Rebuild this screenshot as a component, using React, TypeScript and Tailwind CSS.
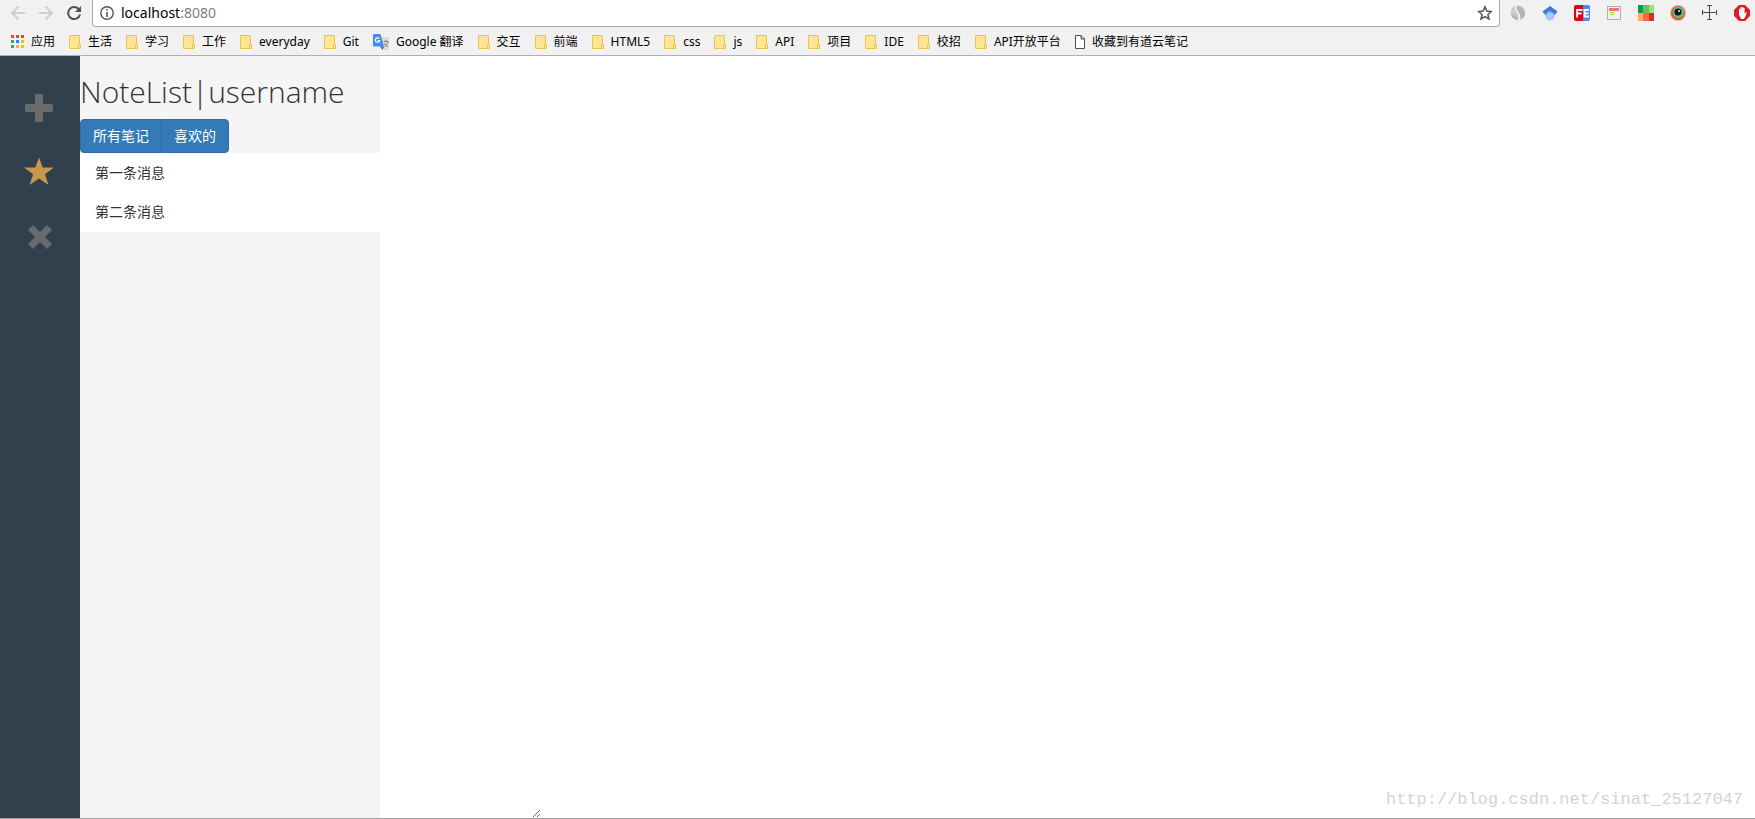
import React, { useState } from 'react';
import { clsx } from 'clsx';

type BookmarkKind = 'apps' | 'folder' | 'translate' | 'page';

interface Bookmark {
  label: string;
  kind: BookmarkKind;
}

interface Note {
  id: number;
  title: string;
  favorite: boolean;
}

const bookmarks: Bookmark[] = [
  { label: '应用', kind: 'apps' },
  { label: '生活', kind: 'folder' },
  { label: '学习', kind: 'folder' },
  { label: '工作', kind: 'folder' },
  { label: 'everyday', kind: 'folder' },
  { label: 'Git', kind: 'folder' },
  { label: 'Google 翻译', kind: 'translate' },
  { label: '交互', kind: 'folder' },
  { label: '前端', kind: 'folder' },
  { label: 'HTML5', kind: 'folder' },
  { label: 'css', kind: 'folder' },
  { label: 'js', kind: 'folder' },
  { label: 'API', kind: 'folder' },
  { label: '项目', kind: 'folder' },
  { label: 'IDE', kind: 'folder' },
  { label: '校招', kind: 'folder' },
  { label: 'API开放平台', kind: 'folder' },
  { label: '收藏到有道云笔记', kind: 'page' },
];

const notes: Note[] = [
  { id: 1, title: '第一条消息', favorite: false },
  { id: 2, title: '第二条消息', favorite: false },
];

const appDots = [
  '#ea4335', '#ea4335', '#ea4335',
  '#34a853', '#1a8cff', '#fbbc05',
  '#34a853', '#fbbc05', '#fbbc05',
];

const BookmarkIcon = ({ kind }: { kind: BookmarkKind }) => {
  if (kind === 'apps') {
    return (
      <svg width="13" height="13" viewBox="0 0 13 13" shapeRendering="crispEdges">
        {appDots.map((color, i) => (
          <rect key={i} x={(i % 3) * 5} y={Math.floor(i / 3) * 5} width="3" height="3" fill={color} />
        ))}
      </svg>
    );
  }
  if (kind === 'translate') {
    return (
      <svg width="16" height="16" viewBox="0 0 16 16">
        <path d="M7 3h9v13H9z" fill="#dcdcdc" />
        <path d="M10.500 7.500h5M13 6v1.500M15 7.500c-.5 2.500-2 4-4 5M11.500 9c.8 1.700 2 3 3.500 3.800" stroke="#7b8f94" fill="none" />
        <path d="M1 0h6.500l3.500 12.500H1a1 1 0 0 1-1-1V1a1 1 0 0 1 1-1z" fill="#4a8af4" />
        <path d="M7 12.500h4L9.500 16z" fill="#3a66c4" />
        <path d="M6.300 4.700A2.200 2.200 0 1 0 6.700 6.500H4.600" stroke="#fff" strokeWidth="1.200" fill="none" />
      </svg>
    );
  }
  if (kind === 'page') {
    return (
      <svg width="10" height="14" viewBox="0 0 10 14">
        <path d="M.5.5h5.500l3.500 3.500v9.500h-9zM6 .5V4h3.500" fill="#fff" stroke="#4d4d4d" />
      </svg>
    );
  }
  return (
    <svg width="12" height="14" viewBox="0 0 12 14">
      <path d="M.5.5h10v13H.5z" fill="#ffe594" stroke="#ebc549" />
      <path d="M9.500 9.500h2v4h-2z" fill="#ffe594" stroke="#ebc549" />
    </svg>
  );
};

/* Icons of the installed extensions, left to right */
const extensions = [
  {
    name: 'Proxy',
    icon: (
      <>
        <circle cx="8" cy="8" r="7.200" fill="#b5b5b5" />
        <path d="M7.500 0A7.200 7.200 0 0 0 1 9c2 1.500 6 1 7 5 2-5-5-7-.5-14z" fill="#cacaca" />
        <path d="M7 0C2 6.500 13 8 8.500 16" stroke="#f1f1f1" strokeWidth="1.800" fill="none" />
      </>
    ),
  },
  {
    name: 'Scholar',
    icon: (
      <>
        <path d="M8 1l7.500 5.500L12 11H4L.5 6.500z" fill="#3f78e0" />
        <circle cx="8" cy="11" r="4.500" fill="#a9c5fb" />
        <path d="M3.800 9.500a4.500 4.500 0 0 1 8.400 0L8 7z" fill="#6f9ff2" />
      </>
    ),
  },
  {
    name: 'FE Helper',
    icon: (
      <>
        <path d="M2 0h7v16H2a2 2 0 0 1-2-2V2a2 2 0 0 1 2-2z" fill="#e60012" />
        <path d="M9 0h5a2 2 0 0 1 2 2v12a2 2 0 0 1-2 2H9z" fill="#4a8af4" />
        <path d="M3 12.500V5h5.500M3 8.500h4.500M15 5h-4.500v6.500H15M10.500 8.300h4" stroke="#fff" strokeWidth="1.800" fill="none" />
      </>
    ),
  },
  {
    name: 'Reader',
    icon: (
      <>
        <rect x="1.500" y="1.500" width="13" height="13" fill="#f2f2f2" stroke="#b0b0b0" />
        <path d="M3 3h10v3H3z" fill="#ff6f69" />
        <path d="M4 7.500h4M4 9.500h4" stroke="#a5de37" />
      </>
    ),
  },
  {
    name: 'Palette',
    icon: (
      <>
        <path d="M0 0h5v8H0z" fill="#0f9d4c" />
        <path d="M5 0h6v8H5z" fill="#6abf62" />
        <path d="M11 0h5v8h-5z" fill="#a8dc6c" />
        <path d="M0 8h5v8H0z" fill="#ffab5e" />
        <path d="M5 8h6v8H5z" fill="#f56c40" />
        <path d="M11 8h5v8h-5z" fill="#d93222" />
      </>
    ),
  },
  {
    name: 'Color picker',
    icon: (
      <>
        <circle cx="8" cy="8" r="8" fill="#f5b070" />
        <circle cx="8" cy="8" r="7" fill="#e0523c" />
        <circle cx="8.500" cy="7.500" r="5.800" fill="#6fb85f" />
        <circle cx="8" cy="7" r="4.800" fill="#4fc0c8" />
        <circle cx="8" cy="7" r="3.500" fill="#101010" />
        <circle cx="9" cy="6" r="1" fill="#fff" />
      </>
    ),
  },
  {
    name: 'Ruler',
    icon: <path d="M0 7.500h15M7.500 0v15M5 .5h5M5 14.500h5M.5 5v5M14.500 5v5" stroke="#4a4a4a" fill="none" />,
  },
  {
    name: 'AdBlock',
    icon: (
      <>
        <path d="M5 0h6l5 5v6l-5 5H5l-5-5V5z" fill="#df1f1f" />
        <path d="M5 9.500V4h1.400v3.500V2.500h1.400v4.500V2h1.400v5.500V3h1.400v6l1-1.500h1.200L11 12.500 9.500 14H7z" fill="#fff" />
      </>
    ),
  },
];

const BrowserBar = () => {
  const [url, setUrl] = useState('localhost:8080');
  const [host, port] = url.split(':');

  return (
    <header className="shrink-0 border-b border-[#b0b0b0] bg-[#f1f1f1]">
      <div className="flex h-[27px] items-start">
        <div className="flex h-[26px] items-center gap-3 px-[10px]">
          <button aria-label="Back" className="text-[#d0d0d0]">
            <svg width="16" height="16" viewBox="0 0 16 16" fill="none" stroke="currentColor" strokeWidth="2">
              <path d="M15 8H2.500M8.500 1.500L2 8l6.500 6.500" />
            </svg>
          </button>
          <button aria-label="Forward" className="text-[#d0d0d0]">
            <svg width="16" height="16" viewBox="0 0 16 16" fill="none" stroke="currentColor" strokeWidth="2">
              <path d="M1 8h12.500M7.500 1.500L14 8l-6.500 6.500" />
            </svg>
          </button>
          <button aria-label="Reload" className="text-[#505050]">
            <svg width="16" height="16" viewBox="0 0 16 16">
              <path d="M12.600 4A6 6 0 1 0 14 9.500" fill="none" stroke="currentColor" strokeWidth="2" />
              <path d="M15 1v6H9z" fill="currentColor" />
            </svg>
          </button>
        </div>
        <div className="flex h-[27px] flex-1 items-center rounded-b-sm border border-t-0 border-[#a8a8a8] bg-white pr-[6px] pl-[7px]">
          <svg width="14" height="14" viewBox="0 0 14 14" className="shrink-0">
            <circle cx="7" cy="7" r="6.200" fill="none" stroke="#555" strokeWidth="1.400" />
            <path d="M6.200 3h1.600v1.600H6.200zM6.200 6h1.600v5H6.200z" fill="#555" />
          </svg>
          <label className="relative ml-[7px] flex-1 text-sm leading-5">
            <span aria-hidden="true" className="block text-black">
              {host}
              <span className="text-[#808080]">:{port}</span>
            </span>
            <input
              aria-label="Address"
              value={url}
              onChange={(e) => setUrl(e.target.value)}
              className="absolute inset-0 w-full bg-transparent text-transparent caret-black outline-none"
            />
          </label>
          <button aria-label="Bookmark this page">
            <svg width="16" height="16" viewBox="0 0 16 16">
              <path d="M8 1.800l1.800 4.300 4.600.4-3.500 3 1.100 4.500L8 11.600 4 14l1.100-4.500-3.500-3 4.600-.4z" fill="none" stroke="#555" strokeWidth="1.500" />
            </svg>
          </button>
        </div>
        <div className="flex h-[26px] items-center gap-4 pr-[5px] pl-[10px]">
          {extensions.map((ext) => (
            <button key={ext.name} aria-label={ext.name}>
              <svg width="16" height="16" viewBox="0 0 16 16">{ext.icon}</svg>
            </button>
          ))}
        </div>
      </div>
      <nav className="flex h-7 items-center gap-[14px] pt-px pl-[11px] text-xs text-black">
        {bookmarks.map((item) => (
          <a key={item.label} href="#" className="flex shrink-0 items-center gap-[7px]">
            <BookmarkIcon kind={item.kind} />
            {item.label}
          </a>
        ))}
      </nav>
    </header>
  );
};

/**
 * Dark tool strip on the left of the notes app
 */
const Toolbar = () => {
  return (
    <aside className="flex w-20 shrink-0 flex-col items-center gap-[30px] bg-[#30404d] pt-[35px] pr-[2px] text-[#676b6e]">
      <button aria-label="Add note">
        <svg width="34" height="34" viewBox="0 0 34 34">
          <path d="M13 4.500a1.500 1.500 0 0 1 1.500-1.500h5a1.500 1.500 0 0 1 1.500 1.500V13h8.500a1.500 1.500 0 0 1 1.500 1.500v5a1.500 1.500 0 0 1-1.500 1.500H21v8.500a1.500 1.500 0 0 1-1.500 1.500h-5a1.500 1.500 0 0 1-1.500-1.500V21H4.500A1.500 1.500 0 0 1 3 19.500v-5A1.500 1.500 0 0 1 4.500 13H13z" fill="currentColor" />
        </svg>
      </button>
      <button aria-label="Toggle favorite" className="text-[#c8974c]">
        <svg width="34" height="34" viewBox="0 0 34 34">
          <path d="M17 2.500l3.700 10H32l-9.100 6.800 3.600 10.700L17 23.500 7.500 30l3.600-10.700L2 12.500h11.300z" fill="currentColor" />
        </svg>
      </button>
      <button aria-label="Delete note">
        <svg width="34" height="34" viewBox="0 0 34 34">
          <path d="M11 6.500l7 7 7-7 4.500 4.500-7 7 7 7-4.500 4.500-7-7-7 7L6.500 25l7-7-7-7z" fill="currentColor" stroke="currentColor" strokeLinejoin="round" />
        </svg>
      </button>
    </aside>
  );
};

const NotesList = () => {
  const [show, setShow] = useState<'all' | 'favorites'>('all');
  const visible = show === 'all' ? notes : notes.filter((note) => note.favorite);
  const tab = 'h-[34px] border border-[#2e6da4] bg-[#337ab7] px-3 text-sm text-white';

  return (
    <section className="w-[300px] shrink-0 bg-[#f5f5f5] text-[#333]">
      <h2 className="mt-[19px] mb-[11px] font-['Open_Sans',sans-serif] text-[30px] leading-[33px] font-light">
        NoteList|username
      </h2>
      <div className="flex">
        <button className={clsx(tab, 'rounded-l')} onClick={() => setShow('all')}>
          所有笔记
        </button>
        <button className={clsx(tab, '-ml-px rounded-r')} onClick={() => setShow('favorites')}>
          喜欢的
        </button>
      </div>
      <ul className="bg-white">
        {visible.map((note) => (
          <li key={note.id} className="not-first:-mt-px">
            <a href="#" className="block px-[15px] py-[10px] text-sm leading-5">
              {note.title}
            </a>
          </li>
        ))}
      </ul>
    </section>
  );
};

export default function App() {
  return (
    <div className="relative flex h-screen flex-col bg-white font-['Noto_Sans','Noto_Sans_CJK_SC',sans-serif]">
      <BrowserBar />
      <main className="flex flex-1 border-b border-[#a0a0a0]">
        <Toolbar />
        <NotesList />
        <textarea aria-label="Note" className="w-[161px] resize bg-white outline-none" />
      </main>
      <p className="absolute right-3 bottom-[7px] font-['Liberation_Mono',monospace] text-[17px] leading-6 text-[#d4d4ce]">
        http://blog.csdn.net/sinat_25127047
      </p>
    </div>
  );
}
